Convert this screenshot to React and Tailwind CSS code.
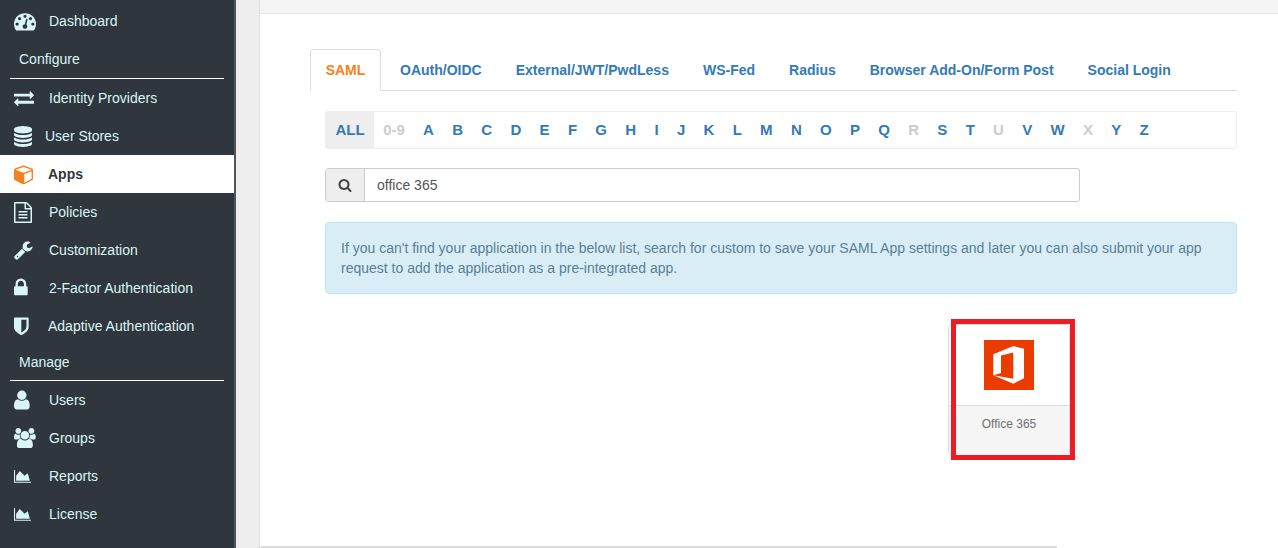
import React from "react";

const P = {
  dash: ["M384 1152q0-53-37.500-90.500t-90.500-37.500-90.500 37.500-37.500 90.500 37.500 90.500 90.500 37.500 90.500-37.500 37.500-90.500zm192-448q0-53-37.500-90.500t-90.500-37.500-90.500 37.500-37.500 90.500 37.500 90.500 90.500 37.500 90.500-37.500 37.500-90.500zm428 481l101-382q6-26-7.500-48.500t-38.500-29.500-48 6.500-30 39.500l-101 382q-60 5-107 43.500t-63 98.500q-20 77 20 146t117 89 146-20 89-117q16-60-6-117t-72-91zm660-33q0-53-37.500-90.500t-90.500-37.500-90.500 37.500-37.500 90.500 37.500 90.500 90.500 37.500 90.500-37.500 37.500-90.500zm-640-640q0-53-37.500-90.500t-90.500-37.500-90.500 37.500-37.500 90.500 37.500 90.500 90.500 37.500 90.500-37.500 37.500-90.500zm448 192q0-53-37.500-90.500t-90.500-37.500-90.500 37.500-37.500 90.500 37.500 90.500 90.500 37.500 90.500-37.500 37.500-90.500zm320 448q0 261-141 483-19 29-54 29h-1402q-35 0-54-29-141-221-141-483 0-182 71-348t191-286 286-191 348-71 348 71 286 191 191 286 71 348z", 0, 1792, 22],
  exchange: ["M1792 1184v192q0 13-9.500 22.500t-22.500 9.500h-1376v192q0 13-9.500 22.500t-22.500 9.500q-12 0-24-10l-319-320q-9-9-9-22 0-14 9-23l320-320q9-9 23-9 13 0 22.500 9.500t9.500 22.500v192h1376q13 0 22.500 9.500t9.500 22.500zm0-544q0 14-9 23l-320 320q-9 9-23 9-13 0-22.500-9.500t-9.500-22.500v-192h-1376q-13 0-22.500-9.500t-9.500-22.500v-192q0-13 9.500-22.500t22.500-9.500h1376v-192q0-14 9-23t23-9q12 0 24 10l319 319q9 9 9 23z", 0, 1792, 20],
  db: ["M896 768q237 0 443-43t325-127v170q0 69-103 128t-280 93.500-385 34.500-385-34.500-280-93.500-103-128v-170q119 84 325 127t443 43zm0 768q237 0 443-43t325-127v170q0 69-103 128t-280 93.500-385 34.500-385-34.500-280-93.500-103-128v-170q119 84 325 127t443 43zm0-384q237 0 443-43t325-127v170q0 69-103 128t-280 93.500-385 34.500-385-34.500-280-93.500-103-128v-170q119 84 325 127t443 43zm0-1152q208 0 385 34.500t280 93.500 103 128v128q0 69-103 128t-280 93.500-385 34.500-385-34.500-280-93.500-103-128v-128q0-69 103-128t280-93.500 385-34.500z", 128, 1536, 21],
  cube: ["M896 1629l640-349v-636l-640 233v752zm-64-864l698-254-698-254-698 254zm832-252v768q0 35-18 65t-50 47l-704 384q-28 16-61 16t-61-16l-704-384q-32-17-50-47t-18-65v-768q0-40 23-73t61-48l704-256q22-8 44-8t44 8l704 256q38 15 61 48t23 73z", 0, 1664, 20.500],
  file: ["M1596 380q28 28 48 76t20 88v1152q0 40-28 68t-68 28h-1344q-40 0-68-28t-28-68v-1600q0-40 28-68t68-28h896q40 0 88 20t76 48zm-444-244v376h376q-10-29-22-41l-313-313q-12-12-41-22zm384 1528v-1024h-416q-40 0-68-28t-28-68v-416h-768v1536h1280zm-1024-864q0-14 9-23t23-9h704q14 0 23 9t9 23v64q0 14-9 23t-23 9h-704q-14 0-23-9t-9-23v-64zm736 224q14 0 23 9t9 23v64q0 14-9 23t-23 9h-704q-14 0-23-9t-9-23v-64q0-14 9-23t23-9h704zm0 256q14 0 23 9t9 23v64q0 14-9 23t-23 9h-704q-14 0-23-9t-9-23v-64q0-14 9-23t23-9h704z", 128, 1536, 21],
  wrench: ["M448 1472q0-26-19-45t-45-19-45 19-19 45 19 45 45 19 45-19 19-45zm644-420l-682 682q-37 37-90 37-52 0-91-37l-106-108q-38-36-38-90 0-53 38-91l681-681q39 98 114.500 173.500t173.500 114.500zm634-435q0 39-23 106-47 134-164.500 217.500t-258.500 83.500q-185 0-316.500-131.500t-131.500-316.500 131.500-316.500 316.500-131.500q58 0 121.500 16.500t107.500 46.500q16 11 16 28t-16 28l-293 169v224l193 107q5-3 79-48.500t135.500-81 70.500-35.500q15 0 23.500 10t8.500 25z", 64, 1664, 20],
  lock: ["M640 768h512v-192q0-106-75-181t-181-75-181 75-75 181v192zm832 96v576q0 40-28 68t-68 28h-960q-40 0-68-28t-28-68v-576q0-40 28-68t68-28h32v-192q0-184 132-316t316-132 316 132 132 316v192h32q40 0 68 28t28 68z", 320, 1152, 21.300],
  shield: ["M1344 960v-640h-448v1137q119-63 213-137 235-184 235-360zm192-768v768q0 86-33.500 170.500t-83 150-118 127.500-126.500 103-121 77.500-89.500 49.500-42.500 20q-12 6-26 6t-26-6q-16-7-42.500-20t-89.500-49.500-121-77.500-126.500-103-118-127.500-83-150-33.500-170.500v-768q0-26 19-45t45-19h1152q26 0 45 19t19 45z", 256, 1280, 20.500],
  user: ["M1536 1399q0 109-62.500 187t-150.500 78h-854q-88 0-150.500-78t-62.500-187q0-85 8.500-160.500t31.500-152 58.500-131 94-89 134.500-34.500q131 128 313 128t313-128q76 0 134.500 34.500t94 89 58.500 131 31.500 152 8.500 160.500zm-256-887q0 159-112.500 271.500t-271.500 112.500-271.500-112.500-112.500-271.500 112.500-271.500 271.500-112.500 271.500 112.500 112.500 271.500z", 256, 1280, 22],
  users: ["M593 896q-162 5-265 128h-134q-82 0-138-40.500t-56-118.500q0-353 124-353 6 0 43.500 21t97.500 42.500 119 21.500q67 0 133-23-5 37-5 66 0 139 81 256zm1071 637q0 120-73 189.500t-194 69.500h-874q-121 0-194-69.500t-73-189.500q0-53 3.500-103.500t14-109 26.500-108.500 43-97.500 62-81 85.500-53.500 111.500-20q10 0 43 21.500t73 48 107 48 135 21.500 135-21.500 107-48 73-48 43-21.500q61 0 111.500 20t85.500 53.500 62 81 43 97.500 26.500 108.500 14 109 3.500 103.500zm-1024-1277q0 106-75 181t-181 75-181-75-75-181 75-181 181-75 181 75 75 181zm704 384q0 159-112.500 271.500t-271.500 112.500-271.500-112.500-112.500-271.500 112.500-271.500 271.500-112.500 271.500 112.500 112.500 271.500zm576 225q0 78-56 118.500t-138 40.500h-134q-103-123-265-128 81-117 81-256 0-29-5-66 66 23 133 23 59 0 119-21.500t97.500-42.500 43.500-21q124 0 124 353zm-128-609q0 106-75 181t-181 75-181-75-75-181 75-181 181-75 181 75 75 181z", 0, 1920, 20.300],
  chart: ["M2048 1536v128h-2048v-1536h128v1408h1920zm-384-1024l256 896h-1664v-576l448-576 576 576z", 0, 2048, 14.800],
};

const Glyph = ({ n }) => {
  const [d, x0, w, s] = P[n];
  return (
    <svg className="shrink-0" width={(w * s) / 1792} height={s} viewBox={`${x0} 0 ${w} 1792`} fill="currentColor">
      <path fillRule="evenodd" d={d} />
    </svg>
  );
};

const Row = ({ n, label, ml, active }) => (
  <div className={`h-[38px] flex items-center pl-[14px] ${active ? "bg-white w-[234px]" : ""}`}>
    <span className={`w-[20px] flex items-center shrink-0 ${active ? "text-[#f58220]" : "text-[#d9f5f5]"}`}><Glyph n={n} /></span>
    <span className={`${ml} ${active ? "text-[#2f363e] font-bold" : "text-[#d9f5f5]"}`}>{label}</span>
  </div>
);

const Head = ({ label, h }) => (
  <>
    <div className={`${h} flex items-center pl-[19px] text-[#d9f5f5]`}>{label}</div>
    <div className="h-px bg-white ml-[10px] w-[214px]" />
  </>
);

const tabs = ["SAML", "OAuth/OIDC", "External/JWT/PwdLess", "WS-Fed", "Radius", "Browser Add-On/Form Post", "Social Login"];
const letters = ["0-9","A","B","C","D","E","F","G","H","I","J","K","L","M","N","O","P","Q","R","S","T","U","V","W","X","Y","Z"];
const off = ["0-9","R","U","X"];

export default function App() {
  return (
    <div className="h-[548px] w-[1278px] overflow-hidden flex bg-white text-[14px] font-['Liberation_Sans',Arial,sans-serif]">
      <aside className="w-[236px] shrink-0 bg-[#2f363e] pt-[2px] border-r-2 border-[#50555a]">
        <Row n="dash" label="Dashboard" ml="ml-[15px]" />
        <Head label="Configure" h="h-[38px]" />
        <Row n="exchange" label="Identity Providers" ml="ml-[15px]" />
        <Row n="db" label="User Stores" ml="ml-[11px]" />
        <Row n="cube" label="Apps" ml="ml-[14px]" active />
        <Row n="file" label="Policies" ml="ml-[15px]" />
        <Row n="wrench" label="Customization" ml="ml-[15px]" />
        <Row n="lock" label="2-Factor Authentication" ml="ml-[15px]" />
        <Row n="shield" label="Adaptive Authentication" ml="ml-[14px]" />
        <Head label="Manage" h="h-[35px]" />
        <Row n="user" label="Users" ml="ml-[15px]" />
        <Row n="users" label="Groups" ml="ml-[15px]" />
        <Row n="chart" label="Reports" ml="ml-[15px]" />
        <Row n="chart" label="License" ml="ml-[15px]" />
      </aside>
      <div className="w-[24px] shrink-0 bg-[#eeeeee] border-r border-[#e0e0e0]" />
      <main className="flex-1 flex flex-col min-w-0">
        <div className="h-[14px] shrink-0 bg-[#f5f5f5] border-b border-[#e7e7e7]" />
        <div className="flex-1 pt-[35px] pl-[50px] relative">
          <div className="w-[927px] h-[42px] flex border-b border-[#dddddd]">
            {tabs.map((t, i) => (
              <div key={t} className={`h-[42px] flex items-center font-bold ${i === 0 ? "mr-[3px] w-[71px] justify-center border border-[#dddddd] border-b-white rounded-t-[4px] bg-white text-[#f58220]" : "mr-[2px] px-[16px] text-[#337ab7]"}`}>{t}</div>
            ))}
          </div>
          <div className="ml-[15px] mt-[20px] w-[912px] h-[38px] flex items-center border border-[#eeeeee] rounded-[3px] font-bold text-[15px]">
            <div className="h-full w-[48px] bg-[#eeeeee] text-[#337ab7] flex items-center justify-center">ALL</div>
            {letters.map((l) => (
              <span key={l} className={`px-[9.150px] ${off.includes(l) ? "text-[#cccccc]" : "text-[#337ab7]"}`}>{l}</span>
            ))}
          </div>
          <div className="ml-[15px] mt-[19px] w-[755px] h-[34px] flex border border-[#cccccc] rounded-[3px]">
            <div className="w-[39px] bg-[#eeeeee] border-r border-[#cccccc] flex items-center justify-center text-[#444444]">
              <svg width="14" height="14" viewBox="0 0 1792 1792" fill="currentColor"><path fillRule="evenodd" d="M1216 832q0-185-131.500-316.500t-316.500-131.500-316.500 131.500-131.500 316.500 131.500 316.500 316.500 131.500 316.500-131.500 131.500-316.500zm512 832q0 52-38 90t-90 38q-54 0-90-38l-343-342q-179 124-399 124-143 0-273.500-55.500t-225-150-150-225-55.500-273.500 55.500-273.500 150-225 225-150 273.500-55.500 273.500 55.500 225 150 150 225 55.500 273.500q0 220-124 399l343 343q37 37 37 90z" /></svg>
            </div>
            <div className="flex-1 flex items-center pl-[12px] text-[#555555]">office 365</div>
          </div>
          <div className="ml-[15px] mt-[20px] w-[912px] h-[72px] px-[15px] pt-[15px] bg-[#d9edf7] border border-[#bce8f1] rounded-[4px] text-[#5b7f93] leading-[20px]">
            If you can't find your application in the below list, search for custom to save your SAML App settings and later you can also submit your app<br />request to add the application as a pre-integrated app.
          </div>
          <div className="ml-[638px] mt-[30px] w-[122px] h-[132px] border border-[#dddddd] rounded-[4px] flex flex-col overflow-hidden">
            <div className="h-[81px] shrink-0 flex justify-center pt-[15px] border-b border-[#dddddd]">
              <svg width="50" height="50" viewBox="0 0 50 50">
                <rect width="50" height="50" fill="#eb3c00" />
                <path fill="#fff" fillRule="evenodd" d="M9.300 14.300 29.300 6 40 8.700V38.300L29.300 43.700 9.300 35.300ZM17 15.500V33L9.300 35.300 29.300 38.800V12.500Z" />
              </svg>
            </div>
            <div className="flex-1 bg-[#f5f5f5] text-center text-[12px] text-[#707070] pt-[9px]">Office 365</div>
          </div>
          <div className="absolute left-[691px] top-[305px] w-[124px] h-[141px] border-[5px] border-[#ed1c24]" />
          <div className="absolute left-0 top-[532px] w-[797px] h-[2px] bg-[#dddddd] rounded-bl-[4px]" />
        </div>
      </main>
    </div>
  );
}
